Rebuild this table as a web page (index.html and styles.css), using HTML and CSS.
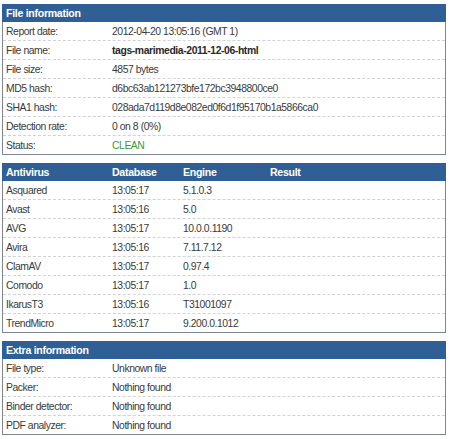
FILE: index.html
```html
<!DOCTYPE html>
<html>
<head>
<meta charset="utf-8">
<link rel="stylesheet" href="styles.css">
</head>
<body>
<section class="panel">
  <div class="head"><span>File information</span></div>
  <div class="row kv"><span class="k">Report date:</span><span class="v">2012-04-20 13:05:16 (GMT 1)</span></div>
  <div class="row kv"><span class="k">File name:</span><span class="v bold">tags-marimedia-2011-12-06-html</span></div>
  <div class="row kv"><span class="k">File size:</span><span class="v">4857 bytes</span></div>
  <div class="row kv"><span class="k">MD5 hash:</span><span class="v">d6bc63ab121273bfe172bc3948800ce0</span></div>
  <div class="row kv"><span class="k">SHA1 hash:</span><span class="v">028ada7d119d8e082ed0f6d1f95170b1a5866ca0</span></div>
  <div class="row kv"><span class="k">Detection rate:</span><span class="v">0 on 8 (0%)</span></div>
  <div class="row kv"><span class="k">Status:</span><span class="v clean">CLEAN</span></div>
</section>

<section class="panel">
  <div class="head av"><span>Antivirus</span><span>Database</span><span>Engine</span><span>Result</span></div>
  <div class="row av"><span>Asquared</span><span>13:05:17</span><span>5.1.0.3</span><span></span></div>
  <div class="row av"><span>Avast</span><span>13:05:16</span><span>5.0</span><span></span></div>
  <div class="row av"><span>AVG</span><span>13:05:17</span><span>10.0.0.1190</span><span></span></div>
  <div class="row av"><span>Avira</span><span>13:05:16</span><span>7.11.7.12</span><span></span></div>
  <div class="row av"><span>ClamAV</span><span>13:05:17</span><span>0.97.4</span><span></span></div>
  <div class="row av"><span>Comodo</span><span>13:05:17</span><span>1.0</span><span></span></div>
  <div class="row av"><span>IkarusT3</span><span>13:05:16</span><span>T31001097</span><span></span></div>
  <div class="row av"><span>TrendMicro</span><span>13:05:17</span><span>9.200.0.1012</span><span></span></div>
</section>

<section class="panel">
  <div class="head"><span>Extra information</span></div>
  <div class="row kv"><span class="k">File type:</span><span class="v">Unknown file</span></div>
  <div class="row kv"><span class="k">Packer:</span><span class="v">Nothing found</span></div>
  <div class="row kv"><span class="k">Binder detector:</span><span class="v">Nothing found</span></div>
  <div class="row kv"><span class="k">PDF analyzer:</span><span class="v">Nothing found</span></div>
</section>
</body>
</html>
```

FILE: styles.css
```css
html, body {
  background: #ffffff;
}
body {
  margin: 4px 4px 0 2px;
  font-family: "Liberation Sans", Arial, sans-serif;
  font-size: 10.4px;
  letter-spacing: -0.45px;
  color: #3a3a3a;
  display: flex;
  flex-direction: column;
  gap: 8px;
}
.panel {
  border: 1px solid #7c8591;
  border-top: none;
  background: #ffffff;
}
.head {
  height: 18px;
  margin: 0 -1px;
  padding: 0 4px;
  background: #2f5f95;
  color: #ffffff;
  font-weight: bold;
  font-size: 10.6px;
  letter-spacing: -0.3px;
  display: flex;
  align-items: center;
}
.row {
  height: 18px;
  padding: 0 3px;
  border-bottom: 1px dashed #cfd2d6;
  display: flex;
  align-items: center;
}
.row:last-child {
  border-bottom: none;
}
.kv .k {
  width: 106px;
  flex: none;
}
.kv .v.bold {
  font-weight: bold;
  color: #2a2a2a;
  letter-spacing: -0.4px;
}
.kv .v.clean {
  color: #3d9a3d;
}
.av {
  display: grid;
  grid-template-columns: 106px 71px 87px 1fr;
  align-items: center;
}
.head.av {
  padding: 0 4px;
}
```
